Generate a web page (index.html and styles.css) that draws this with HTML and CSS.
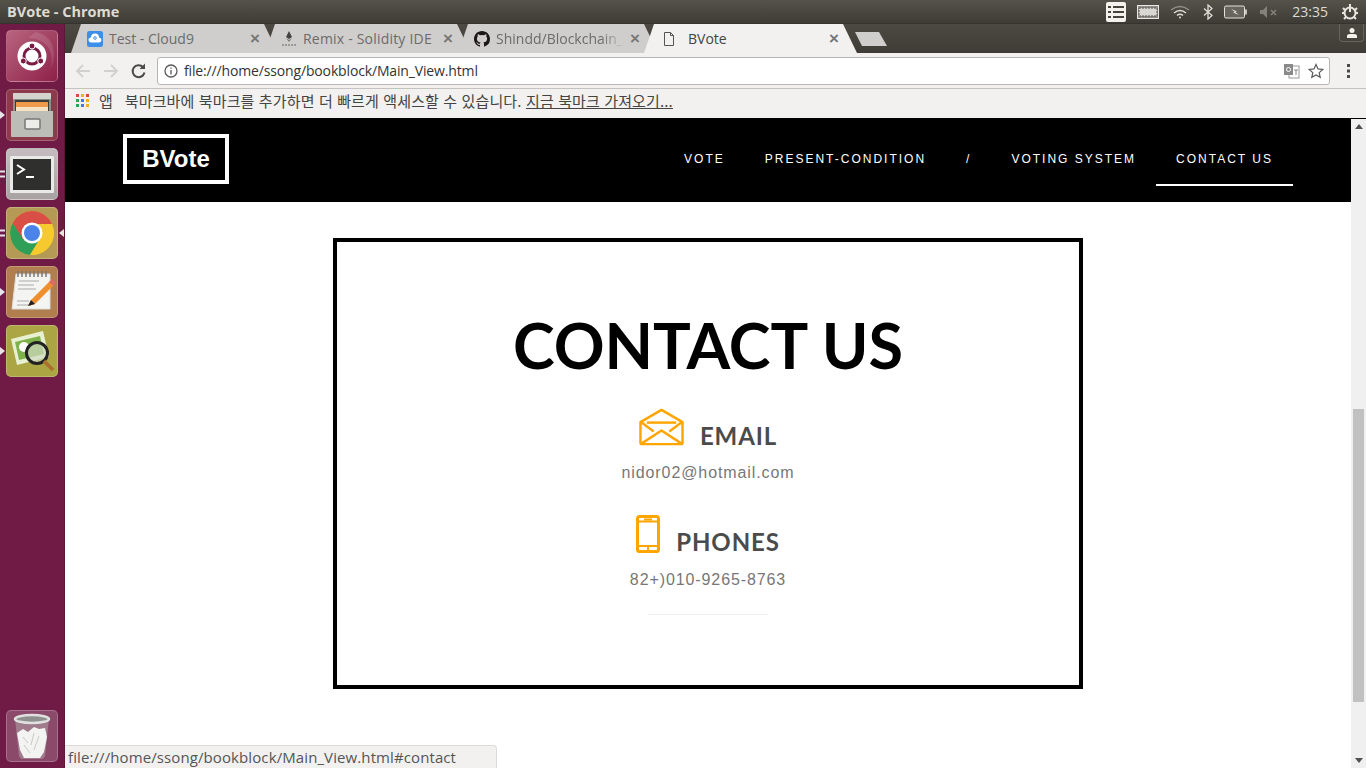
FILE: index.html
```html
<!DOCTYPE html>
<html lang="ko">
<head>
<meta charset="utf-8">
<title>BVote</title>
<link rel="stylesheet" href="styles.css">
</head>
<body>
<div class="screen">
  <header class="topbar">
    <span class="wintitle">BVote - Chrome</span>
    <div class="tray">
      <svg class="t-ind" width="22" height="22" viewBox="0 0 22 22"><rect x="1" y="1" width="20" height="20" rx="2" fill="#f2f1ec"/><g fill="#45433c"><rect x="3" y="5" width="3" height="2"/><rect x="8" y="5" width="11" height="2"/><rect x="3" y="10" width="3" height="2"/><rect x="8" y="10" width="11" height="2"/><rect x="3" y="15" width="3" height="2"/><rect x="8" y="15" width="11" height="2"/></g></svg>
      <svg class="t-kbd" width="22" height="14" viewBox="0 0 22 14"><rect x=".5" y=".5" width="21" height="13" fill="#8e8c86" stroke="#e8e7e2"/><rect x="2" y="3" width="18" height="8" fill="#d8d7d2" stroke="#55534c" stroke-dasharray="2 1"/></svg>
      <svg class="t-wifi" width="20" height="14" viewBox="0 0 20 14" fill="none" stroke="#dfded8" stroke-width="1.5"><path d="M1 5q9-7 18 0" stroke="#8f8d86"/><path d="M4 8q6-5 12 0"/><path d="M7 10.500q3-2.500 6 0"/><circle cx="10" cy="12.500" r="1" fill="#dfded8" stroke="none"/></svg>
      <svg class="t-bt" width="10" height="16" viewBox="0 0 10 16" fill="none" stroke="#dfded8" stroke-width="1.300"><path d="M1 4.500l8 7-4 3.500V1l4 3.500-8 7"/></svg>
      <svg class="t-bat" width="24" height="14" viewBox="0 0 24 14"><rect x=".5" y="1" width="20" height="12" rx="1.500" fill="#67655d" stroke="#e4e3dd"/><rect x="21" y="4.500" width="2" height="5" fill="#c5c4be"/><path d="M7 4l6 2.500-2 .5 4 3-6-2.500 2-.5z" fill="#f0efea"/></svg>
      <svg class="t-vol" width="18" height="12" viewBox="0 0 18 12"><path d="M0 4h3l4-4v12l-4-4H0z" fill="#83817a"/><path d="M11 4l5 5m0-5l-5 5" stroke="#83817a" stroke-width="1.500"/></svg>
      <span class="clock">23:35</span>
      <svg class="t-power" width="18" height="18" viewBox="0 0 18 18" fill="none" stroke="#e6e5df" stroke-width="2"><circle cx="9" cy="10" r="5.500"/><path d="M9 1v8"/><path d="M2 5l2 2M16 5l-2 2M1 10h2M15 10h2M3 16l2-2M15 16l-2-2"/></svg>
    </div>
  </header>
  <div class="desktop">
    <nav class="launcher">
      <div class="lcell"><div class="tile t-dash">
        <svg width="52" height="52" viewBox="0 0 52 52"><path d="M30 2C48 6 52 24 44 40 50 22 40 8 22 8z" fill="#fff" fill-opacity=".12"/><circle cx="26" cy="26" r="14.500" fill="#fff"/><circle cx="26" cy="26" r="8" fill="none" stroke="#7b1c45" stroke-width="3"/><circle cx="26" cy="16" r="3" fill="#7b1c45" stroke="#fff"/><circle cx="17.300" cy="31" r="3" fill="#7b1c45" stroke="#fff"/><circle cx="34.700" cy="31" r="3" fill="#7b1c45" stroke="#fff"/></svg>
      </div></div>
      <div class="lcell"><span class="pip pip-arrow"></span><div class="tile t-files">
        <svg width="52" height="52" viewBox="0 0 52 52"><rect x="7" y="4" width="38" height="7" fill="#d4d4cf"/><rect x="7" y="10" width="38" height="38" rx="1" fill="#8e8e89"/><rect x="9" y="11" width="34" height="12" fill="#3d3d3a"/><rect x="10" y="13" width="32" height="5" fill="#ef9a4a"/><rect x="10" y="18" width="32" height="4" fill="#f4e2c4"/><path d="M5 22h42v25q0 1-1 1H6q-1 0-1-1z" fill="#bdbdb8"/><rect x="19" y="30" width="15" height="10" rx="1" fill="#ecece8" stroke="#777" stroke-width="1.500"/></svg>
      </div></div>
      <div class="lcell"><span class="pip pip-bars"></span><div class="tile t-term">
        <svg width="52" height="52" viewBox="0 0 52 52"><rect x="4" y="8" width="44" height="37" rx="1" fill="#e9e9e6"/><rect x="7" y="11" width="38" height="31" fill="#2f2f2e"/><path d="M11 17l7 4.500-7 4.500" fill="none" stroke="#fff" stroke-width="2"/><rect x="20" y="28" width="8" height="2" fill="#fff"/></svg>
      </div></div>
      <div class="lcell"><span class="pip pip-bars"></span><div class="tile t-chrome">
        <svg width="52" height="52" viewBox="0 0 52 52"><circle cx="26" cy="26" r="22" fill="#e2c11f"/><path d="M26 4A22 22 0 0 0 6.500 16L16 32 26 17h20A22 22 0 0 0 26 4z" fill="#d94f45"/><path d="M6.500 16A22 22 0 0 0 24 48l11-18-18 2z" fill="#2f9f58"/><path d="M26 17h20A22 22 0 0 1 24 48l11-18z" fill="#f6c92e"/><circle cx="26" cy="26" r="10.500" fill="#fff"/><circle cx="26" cy="26" r="8" fill="#4a84e8"/></svg>
        <span class="pip-active"></span>
      </div></div>
      <div class="lcell"><span class="pip pip-arrow"></span><div class="tile t-edit">
        <svg width="52" height="52" viewBox="0 0 52 52"><path d="M10 8h34v35H6z" fill="#f4f4f1" stroke="#ddd"/><path d="M12 5v6m4-6v6m4-6v6m4-6v6m4-6v6m4-6v6m4-6v6m4-6v6" stroke="#777" stroke-width="1.500"/><path d="M13 15h20M12 19h16M12 23h18M11 35h12M11 39h14" stroke="#aaa"/><path d="M25 34l19-19 4 4-19 19-7 2z" fill="#ee9030"/><path d="M43 16l3-3 4 4-3 3z" fill="#e06a6a"/><path d="M25 34l-3 6 7-2z" fill="#222"/></svg>
      </div></div>
      <div class="lcell"><span class="pip pip-arrow"></span><div class="tile t-view">
        <svg width="52" height="52" viewBox="0 0 52 52"><path d="M5 14L37 6l6 26-32 8z" fill="#e8f0d2"/><path d="M9 17l25-6 4 18-25 6z" fill="#7fb24a"/><circle cx="18" cy="22" r="5" fill="#fff"/><circle cx="31" cy="28" r="10.500" fill="#cfd8c0" fill-opacity=".7" stroke="#222" stroke-width="3"/><path d="M38 36l9 9" stroke="#a9702f" stroke-width="3.500"/></svg>
      </div></div>
      <div class="lcell lcell-trash"><div class="tile t-trash">
        <svg width="52" height="52" viewBox="0 0 52 52"><path d="M9 9l4 37q1 3 4 3h18q3 0 4-3l4-37z" fill="#b8b8b6" fill-opacity=".45"/><ellipse cx="26" cy="9" rx="17" ry="4" fill="#8f8f8e" stroke="#e0e0de" stroke-width="2.500"/><path d="M11 23l6-4 5 3 6-5 5 2 6-1 2 9-3 15-4 6-16 0-4-8z" fill="#f3f3f1"/><path d="M17 27l5 6m6-10l-3 12m8-9l-5 14m-10-5l6 8" stroke="#c9c9c7" fill="none"/></svg>
      </div></div>
    </nav>
    <div class="browser">
      <div class="tabstrip">
        <div class="tab tab-a">
          <svg class="favicon" width="16" height="16" viewBox="0 0 16 16"><rect width="16" height="16" rx="2.500" fill="#3b8fe8"/><path d="M4 11.500a2.500 2.500 0 0 1 0-5 4 4 0 0 1 8 0 2.500 2.500 0 0 1 0 5z" fill="#fff"/><circle cx="8" cy="7" r="1.300" fill="none" stroke="#3b8fe8"/></svg>
          <span class="tabname">Test - Cloud9</span><span class="tabx">×</span>
        </div>
        <div class="tab tab-b">
          <svg class="favicon" width="16" height="16" viewBox="0 0 16 16"><path d="M8 0l3 6-3 2-3-2z" fill="#444"/><path d="M8 9l3-2-3 4-3-4z" fill="#777"/><path d="M1 14h14" stroke="#888" stroke-width="1.500" stroke-dasharray="2 1"/></svg>
          <span class="tabname tabwide">Remix - Solidity IDE</span><span class="tabx">×</span>
        </div>
        <div class="tab tab-c">
          <svg class="favicon" width="16" height="16" viewBox="0 0 16 16"><path fill="#1b1817" d="M8 0C3.580 0 0 3.580 0 8c0 3.540 2.290 6.530 5.470 7.590.4.070.55-.17.550-.38v-1.340c-2.230.48-2.690-1.070-2.690-1.070-.36-.93-.89-1.170-.89-1.170-.73-.5.050-.49.050-.49.800.06 1.230.83 1.230.83.710 1.220 1.870.87 2.330.66.070-.52.280-.87.510-1.070-1.780-.2-3.640-.89-3.640-3.950 0-.87.310-1.590.820-2.150-.08-.2-.36-1.020.08-2.120 0 0 .67-.21 2.200.820a7.650 7.650 0 0 1 4 0c1.530-1.040 2.200-.82 2.200-.82.440 1.100.16 1.920.08 2.120.51.560.82 1.270.82 2.150 0 3.070-1.870 3.750-3.650 3.950.29.250.54.730.54 1.480v2.200c0 .21.150.46.550.38A8.010 8.010 0 0 0 16 8c0-4.420-3.580-8-8-8z"/></svg>
          <span class="tabname tabfade">Shindd/Blockchain_</span><span class="tabx">×</span>
        </div>
        <div class="tab tab-active">
          <svg class="favicon" width="16" height="16" viewBox="0 0 16 16" fill="none" stroke="#555" stroke-width="1"><path d="M3.500 1.500h6l3 3v10h-9z"/><path d="M9.500 1.500v3h3"/></svg>
          <span class="tabname">BVote</span><span class="tabx">×</span>
        </div>
        <div class="newtab"></div>
        <div class="profile"><svg width="12" height="12" viewBox="0 0 12 12" fill="#f2f1ec"><circle cx="6" cy="3.500" r="2.500"/><path d="M1 11V9q0-2 3-2h4q3 0 3 2v2z"/></svg></div>
      </div>
      <div class="toolbar">
        <svg class="tool" width="18" height="18" viewBox="0 0 18 18" fill="none" stroke="#d0d0ce" stroke-width="1.800"><path d="M16 9H3m6-6L3 9l6 6"/></svg>
        <svg class="tool" width="18" height="18" viewBox="0 0 18 18" fill="none" stroke="#d0d0ce" stroke-width="1.800"><path d="M2 9h13M9 3l6 6-6 6"/></svg>
        <svg class="tool" width="18" height="18" viewBox="0 0 18 18" fill="none" stroke="#4a4a4a" stroke-width="2"><path d="M14.500 10.500A6 6 0 1 1 13 5"/><path d="M15 1.500V7H9.500z" fill="#4a4a4a" stroke="none"/></svg>
        <div class="omnibox">
          <svg class="info" width="14" height="14" viewBox="0 0 14 14" fill="none" stroke="#5a5a5a" stroke-width="1.300"><circle cx="7" cy="7" r="6"/><path d="M7 6v4.500M7 3.500v1.300"/></svg>
          <span class="url">file:///home/ssong/bookblock/Main_View.html</span>
          <svg class="translate" width="16" height="16" viewBox="0 0 16 16"><rect x="5" y="3" width="10" height="12" fill="#fff" stroke="#999"/><rect x="0" y="1" width="9" height="11" fill="#8a8a8a"/><circle cx="4.500" cy="6.500" r="2" fill="none" stroke="#fff"/><path d="M10 7h4M12 7v5" stroke="#888"/></svg>
          <svg class="star" width="16" height="16" viewBox="0 0 16 16" fill="none" stroke="#5a5a5a" stroke-width="1.200"><path d="M8 1.500l2 4.400 4.800.5-3.600 3.200 1 4.700L8 11.900l-4.200 2.400 1-4.700L1.200 6.400 6 5.900z"/></svg>
        </div>
        <svg class="menu" width="4" height="14" viewBox="0 0 4 14" fill="#4a4a4a"><rect x="0" y="0" width="3" height="3"/><rect x="0" y="5.500" width="3" height="3"/><rect x="0" y="11" width="3" height="3"/></svg>
      </div>
      <div class="bookmarks">
        <span class="apps">
          <i class="d-r"></i><i class="d-y"></i><i class="d-r"></i><i class="d-g"></i><i class="d-b"></i><i class="d-y"></i><i class="d-g"></i><i class="d-b"></i><i class="d-y"></i>
        </span>
        <span class="bmlabel">앱</span>
        <span class="bmtext">북마크바에 북마크를 추가하면 더 빠르게 액세스할 수 있습니다. <u>지금 북마크 가져오기...</u></span>
      </div>
      <div class="viewport">
        <div class="page">
          <div class="navbar">
            <a class="brand">BVote</a>
            <ul class="navlinks">
              <li>Vote</li>
              <li>Present-Condition</li>
              <li>/</li>
              <li>Voting System</li>
              <li class="current">Contact Us</li>
            </ul>
          </div>
          <section class="contact">
            <div class="card">
              <h1 class="title">CONTACT US</h1>
              <div class="item item-mail">
                <h3 class="itemhead">
                  <svg class="ic-mail" width="45" height="38" viewBox="0 0 46 38" fill="none" stroke="#ffa500" stroke-width="2.500" stroke-linejoin="round"><path d="M1.500 14L23 1.500 44.500 14v21q0 1.500-1.500 1.500H3q-1.500 0-1.500-1.500z"/><path d="M8 14.500h30"/><path d="M2 14l13 9.500M44 14l-13 9.500"/><path d="M2.500 36L23 22.500 43.500 36"/></svg>
                  <span>EMAIL</span>
                </h3>
                <p class="itemtext">nidor02@hotmail.com</p>
              </div>
              <div class="item item-phone">
                <h3 class="itemhead">
                  <svg class="ic-phone" width="24" height="38" viewBox="0 0 24 38" fill="none" stroke="#ffa500" stroke-width="3"><rect x="1.500" y="1.500" width="21" height="35" rx="2"/><path d="M3 6.500h18M3 31h18" stroke-width="2"/><path d="M8 4.500h8" stroke-width="2"/><path d="M12 31v6" stroke-width="2"/></svg>
                  <span>PHONES</span>
                </h3>
                <p class="itemtext">82+)010-9265-8763</p>
              </div>
              <hr class="rule">
            </div>
          </section>
        </div>
        <div class="scrollbar">
          <span class="arrow"></span>
          <div class="thumb"></div>
          <span class="arrow arrow-down"></span>
        </div>
        <div class="status">file:///home/ssong/bookblock/Main_View.html#contact</div>
      </div>
    </div>
  </div>
</div>
</body>
</html>
```
FILE: styles.css
```css
* { box-sizing: border-box; }
html, body { margin: 0; padding: 0; height: 100%; overflow: hidden; }
body { font-family: "Liberation Sans", Arial, sans-serif; background: #fff; }
.screen { width: 1366px; height: 768px; display: flex; flex-direction: column; }

.topbar { height: 24px; flex: none; display: flex; align-items: center; justify-content: space-between; background: linear-gradient(#55524a, #3e3c36); border-bottom: 1px solid #35332e; padding: 0 7px; }
.wintitle { font: 700 14.500px "Open Sans", "Noto Sans", sans-serif; color: #dfdbd2; }
.tray { display: flex; align-items: center; }
.t-kbd { margin-left: 10px; }
.t-wifi { margin-left: 11px; }
.t-bt { margin-left: 13px; }
.t-bat { margin-left: 11px; }
.t-vol { margin-left: 12px; }
.clock { margin-left: 14px; font: 14px "Open Sans", "Noto Sans", sans-serif; color: #dcdbd5; }
.t-power { margin-left: 13px; }

.desktop { flex: 1; display: flex; min-height: 0; }
.launcher { width: 65px; flex: none; background: #701b45; border-right: 1px solid #5b1738; display: flex; flex-direction: column; padding-top: 6px; gap: 7px; }
.lcell { height: 52px; position: relative; padding-left: 6px; flex: none; }
.lcell-trash { margin-top: auto; margin-bottom: 6px; }
.tile { width: 52px; height: 52px; border-radius: 5px; position: relative; border: 1px solid rgba(255,255,255,.22); }
.tile svg { display: block; margin: -1px; }
.t-dash { background: linear-gradient(135deg, #b8657f, #8e2048); }
.t-files { background: #8c3a4c; }
.t-term { background: linear-gradient(#c4bcbe, #a9a2a3); }
.t-chrome { background: #b49a55; }
.t-edit { background: #b17f4f; }
.t-view { background: #aba544; }
.t-trash { background: #8c4a6b; }
.pip { position: absolute; left: 0; top: 50%; transform: translateY(-50%); }
.pip-arrow { width: 0; height: 0; border-left: 5px solid #e8e3e6; border-top: 4px solid transparent; border-bottom: 4px solid transparent; }
.pip-bars { width: 5px; height: 7px; border-top: 2px solid #e8e3e6; border-bottom: 2px solid #e8e3e6; }
.pip-active { position: absolute; right: -7px; top: 50%; margin-top: -4px; width: 0; height: 0; border-right: 5px solid #e8e3e6; border-top: 4px solid transparent; border-bottom: 4px solid transparent; }

.browser { flex: 1; min-width: 0; display: flex; flex-direction: column; }
.tabstrip { height: 29px; flex: none; display: flex; align-items: stretch; background: linear-gradient(#4c4a42, #3e3c36); position: relative; padding-left: 6px; }
.tab { margin-right: -13px; display: flex; align-items: center; padding: 0 18px 0 16px; background: #cfcecc; clip-path: polygon(0 100%, 10px 0, calc(100% - 14px) 0, 100% 100%); font: 14px "Open Sans", "Noto Sans", sans-serif; color: #6b6b6b; }
.tab-a { width: 207px; }
.tab-b { width: 206px; }
.tab-c { width: 200px; }
.tab-active { width: 213px; margin-left: -1px; padding-left: 17px; background: #f2f1ef; color: #444; position: relative; z-index: 1; }
.favicon { flex: none; margin-right: 6px; }
.tab-active .favicon { margin-right: 11px; }
.tabname { flex: 1; white-space: nowrap; overflow: hidden; min-width: 0; }
.tabwide { letter-spacing: .2px; }
.tabfade { -webkit-mask-image: linear-gradient(90deg, #000 82%, transparent); mask-image: linear-gradient(90deg, #000 82%, transparent); }
.tabx { flex: none; margin-left: 6px; color: #777; font: 700 17px/1 "Liberation Sans", sans-serif; }
.newtab { width: 32px; height: 14px; margin: 8px 0 0 11px; background: #cfcecc; clip-path: polygon(0 0, 75% 0, 100% 100%, 22% 100%); }
.profile { position: absolute; right: 2px; top: 0; width: 25px; height: 18px; border: 1px solid #66645c; border-top: 0; border-radius: 0 0 4px 4px; display: flex; align-items: center; justify-content: center; }

.toolbar { height: 35px; flex: none; background: #f2f1ef; display: flex; align-items: center; padding: 0 0 0 9px; border-top: 1px solid #f2f1ef; }
.tool { margin-right: 10px; flex: none; }
.omnibox { width: 1173px; height: 28px; margin-left: -1px; background: #fff; border: 1px solid #b7b6b4; border-radius: 3px; display: flex; align-items: center; padding: 0 0 0 6px; }
.info { flex: none; }
.url { flex: 1; margin-left: 6px; margin-top: -2px; font: 14px "Open Sans", "Noto Sans", sans-serif; color: #333; letter-spacing: -.15px; }
.translate { margin-right: 8px; }
.star { margin-right: 5px; }
.menu { margin-left: 17px; flex: none; }

.bookmarks { height: 30px; flex: none; background: #f2f1ef; border-top: 1px solid #c4c3c1; display: flex; align-items: center; padding: 0 0 7px 11px; font: 15px "Noto Sans CJK KR", "Noto Sans", sans-serif; color: #444; }
.apps { display: grid; grid-template-columns: repeat(3, 3px); grid-auto-rows: 3px; gap: 2px; width: 13px; }
.apps i { display: block; }
.d-r { background: #e0463a; }
.d-y { background: #f2b01e; }
.d-g { background: #2fa354; }
.d-b { background: #3b7de8; }
.bmlabel { margin-left: 10px; }
.bmtext { margin-left: 12px; white-space: nowrap; letter-spacing: .13px; }

.viewport { flex: 1; min-height: 0; position: relative; display: flex; border-top: 1px solid #000; }
.page { flex: 1; min-width: 0; background: #fff; }
.navbar { height: 84px; background: #000; display: flex; align-items: center; justify-content: space-between; padding: 0 58px 2px; margin-top: -1px; }
.brand { display: block; width: 106px; height: 50px; border: 4px solid #fff; color: #fff; font: 700 24px/42px "Liberation Sans", Arial, sans-serif; text-align: center; }
.navlinks { list-style: none; display: flex; margin: 0; padding: 0; }
.navlinks li { padding: 0 20px; height: 54px; line-height: 54px; font-size: 12px; letter-spacing: 2px; text-transform: uppercase; color: #fff; white-space: nowrap; }
.navlinks li.current { border-bottom: 2px solid #fff; }

.contact { display: flex; justify-content: center; padding-top: 36px; }
.card { width: 750px; height: 451px; border: 4px solid #000; display: flex; flex-direction: column; align-items: center; padding-top: 68px; }
.title { margin: 0 0 36px; font: 700 63px/70px Lato, sans-serif; color: #000; white-space: nowrap; }
.item { display: flex; flex-direction: column; align-items: center; margin-bottom: 36px; }
.item-mail { margin-bottom: 37px; }
.itemhead { margin: 0; height: 40px; display: flex; align-items: center; font: 700 24px/1 Lato, sans-serif; color: #4b4b4b; letter-spacing: .9px; }
.ic-mail { margin-right: 16px; margin-top: -18px; }
.ic-phone { margin-right: 16px; margin-top: -16px; }
.itemtext { margin: 6px 0 0; font-size: 16px; line-height: 24px; letter-spacing: .9px; color: #777; }
.item-mail .itemtext { margin-top: 5px; }
.rule { width: 120px; height: 1px; border: 0; background: #eee; margin: -14px 0 0; }

.scrollbar { width: 15px; flex: none; background: #f0f0f0; display: flex; flex-direction: column; align-items: center; position: relative; }
.arrow { width: 0; height: 0; border-left: 4px solid transparent; border-right: 4px solid transparent; border-bottom: 5px solid #505050; margin-top: 5px; }
.arrow-down { margin: auto 0 5px; border-bottom: 0; border-top: 5px solid #505050; }
.thumb { position: absolute; left: 2px; top: 290px; width: 11px; height: 293px; background: #c1c1c1; }
.status { position: absolute; left: 0; bottom: 0; width: 432px; height: 23px; background: #f2f1ef; border: 1px solid #dcdbd9; border-left: 0; border-bottom: 0; border-radius: 0 4px 0 0; padding: 1px 0 0 3px; font: 15px "Open Sans", "Noto Sans", sans-serif; letter-spacing: .1px; color: #555; white-space: nowrap; }
```
